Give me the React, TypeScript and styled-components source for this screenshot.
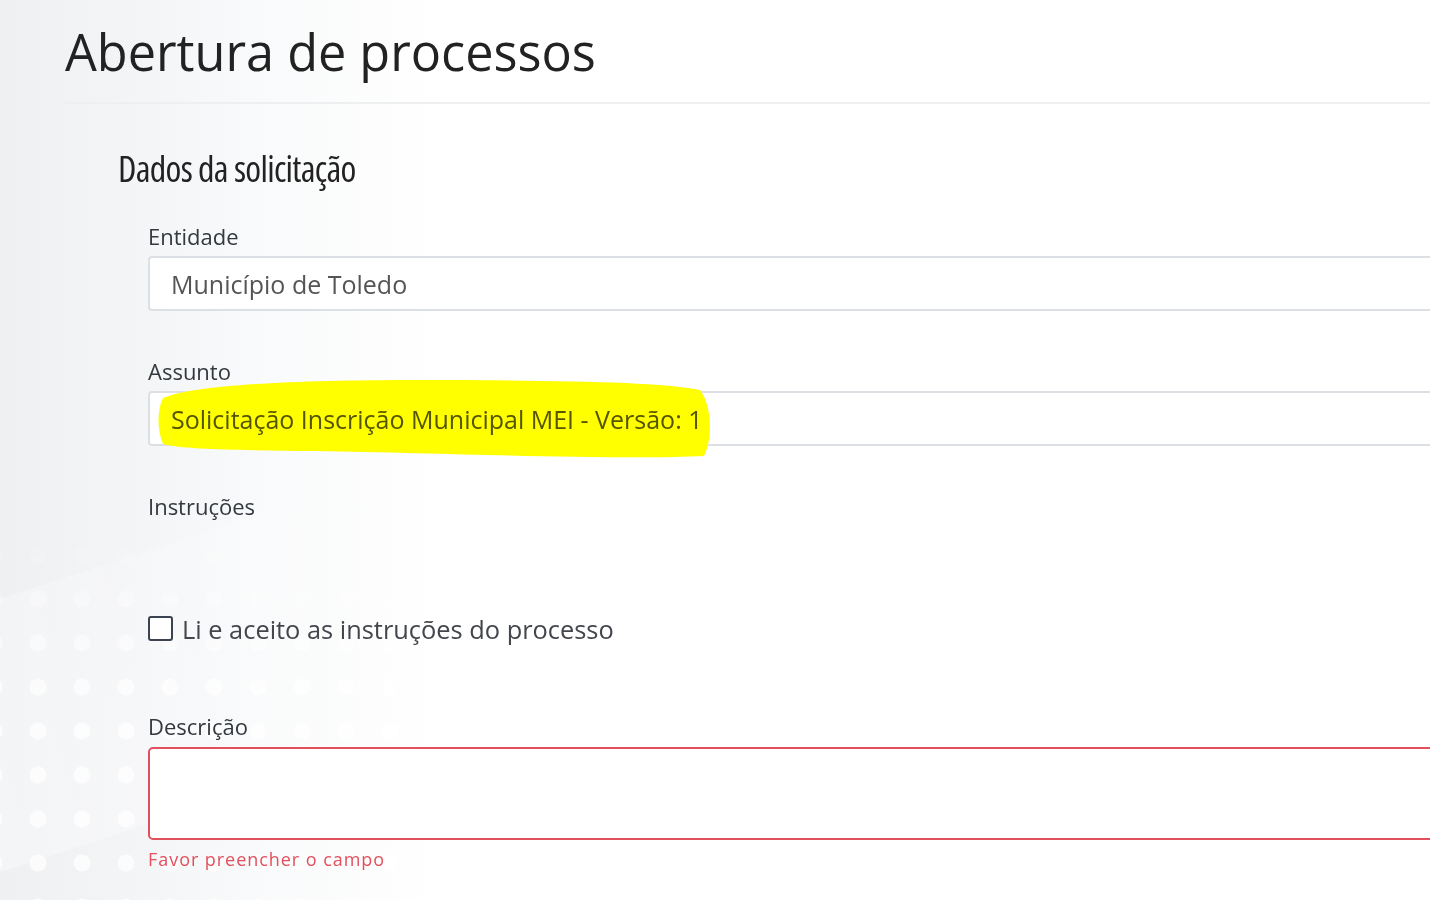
import React from "react";
import styled, { createGlobalStyle } from "styled-components";

const GlobalStyle = createGlobalStyle`
    html, body {
        margin: 0;
        padding: 0;
        overflow: hidden;
        background: #fff;
    }
    body {
        font-family: "Open Sans", "Liberation Sans", sans-serif;
        color: #333;
    }
`

const Backdrop = styled.div`
    position: relative;
    min-height: 900px;
    width: 1430px;
    overflow: hidden;
    background: linear-gradient(90deg, #eef0f2 0px, #f3f4f6 120px, #f9fafb 260px, #ffffff 440px);
    &::before {
        content: "";
        position: absolute;
        left: 0;
        top: 0;
        width: 440px;
        height: 900px;
        background-image: radial-gradient(circle, rgba(255, 255, 255, 0.8) 0 8px, rgba(255, 255, 255, 0) 9px);
        background-size: 44px 44px;
        background-position: 16px 5px;
        -webkit-mask-image: linear-gradient(180deg, transparent 58%, rgba(0, 0, 0, 0.9) 78%);
        mask-image: linear-gradient(180deg, transparent 58%, rgba(0, 0, 0, 0.9) 78%);
    }
    &::after {
        content: "";
        position: absolute;
        left: -220px;
        top: 560px;
        width: 720px;
        height: 260px;
        transform: rotate(-18deg);
        background: linear-gradient(90deg, rgba(255, 255, 255, 0.45), rgba(255, 255, 255, 0));
    }
`

const Page = styled.div`
    position: relative;
    z-index: 1;
    width: 1600px;
    padding: 24px 0 0 65px;
`

const Title = styled.h1`
    margin: 0;
    font-size: 50.4px;
    line-height: 55px;
    font-weight: 400;
    color: #222;
`

const Divider = styled.div`
    height: 2px;
    margin-top: 23px;
    background: #eeeff1;
`

const Section = styled.section`
    padding-left: 53px;
`

const SectionTitle = styled.h2`
    margin: 45px 0 0;
    font-size: 36px;
    line-height: 40px;
    font-weight: 500;
    font-stretch: 75%;
    color: #222;
    letter-spacing: -0.7px;
`

const Form = styled.div`
    padding: 32px 0 0 30px;
`

const Field = styled.div<{ $gap?: number; $top?: number }>`
    display: flex;
    flex-direction: column;
    margin-top: ${p => p.$top ?? 0}px;
    margin-bottom: ${p => p.$gap ?? 45}px;
`

const Label = styled.label`
    display: block;
    font-size: 22px;
    line-height: 31px;
    color: #34383f;
    margin-bottom: 4px;
`

const ValueBox = styled.div`
    position: relative;
    display: flex;
    align-items: center;
    height: 55px;
    box-sizing: border-box;
    padding: 0 21px;
    border: 2px solid #dcdfe4;
    border-radius: 4px;
    background: #fff;
    font-size: 25px;
    color: #555;
`

const Value = styled.span`
    position: relative;
    z-index: 1;
    white-space: nowrap;
    mix-blend-mode: multiply;
`

const Marker = styled.svg`
    position: absolute;
    left: 5px;
    top: -15px;
    width: 558px;
    height: 82px;
    z-index: 0;
`

const InstructionsBody = styled.div`
    min-height: 85px;
`

const CheckRow = styled.label`
    display: flex;
    align-items: center;
    gap: 9px;
    height: 35px;
    font-size: 25.4px;
    color: #43464c;
    cursor: pointer;
`

const CheckBox = styled.input`
    appearance: none;
    width: 25px;
    height: 25px;
    margin: 0;
    box-sizing: border-box;
    border: 2px solid #3c4350;
    border-radius: 3px;
    background: #fff;
`

const TextArea = styled.textarea<{ $invalid?: boolean }>`
    display: block;
    width: 100%;
    height: 93px;
    margin-top: 1px;
    box-sizing: border-box;
    border: 2px solid ${p => (p.$invalid ? "#e2505d" : "#dcdfe4")};
    border-radius: 5px;
    background: #fff;
    resize: none;
    font-family: inherit;
    font-size: 25px;
    outline: none;
`

const ErrorText = styled.div`
    margin-top: 7px;
    font-size: 18px;
    line-height: 24px;
    letter-spacing: 0.95px;
    color: #e2505d;
`

const App = () => {
    return (
        <>
            <GlobalStyle />
            <Backdrop>
                <Page>
                    <Title>Abertura de processos</Title>
                    <Divider />
                    <Section>
                        <SectionTitle>Dados da solicitação</SectionTitle>
                        <Form>
                            <Field>
                                <Label>Entidade</Label>
                                <ValueBox>
                                    <Value>Município de Toledo</Value>
                                </ValueBox>
                            </Field>
                            <Field>
                                <Label>Assunto</Label>
                                <ValueBox>
                                    <Marker viewBox="0 0 558 82" preserveAspectRatio="none">
                                        <path
                                            d="M8 20 C40 6 150 1 300 2 C420 3 505 4 545 12 C557 28 558 60 549 78 C470 82 320 76 160 73 C90 72 30 72 8 66 C2 52 2 32 8 20 Z"
                                            fill="#ffff00"
                                        />
                                    </Marker>
                                    <Value>Solicitação Inscrição Municipal MEI - Versão: 1</Value>
                                </ValueBox>
                            </Field>
                            <Field $gap={0}>
                                <Label>Instruções</Label>
                                <InstructionsBody />
                                <CheckRow>
                                    <CheckBox type="checkbox" />
                                    Li e aceito as instruções do processo
                                </CheckRow>
                            </Field>
                            <Field $gap={0} $top={65}>
                                <Label>Descrição</Label>
                                <TextArea $invalid />
                                <ErrorText>Favor preencher o campo</ErrorText>
                            </Field>
                        </Form>
                    </Section>
                </Page>
            </Backdrop>
        </>
    );
};

export default App;
